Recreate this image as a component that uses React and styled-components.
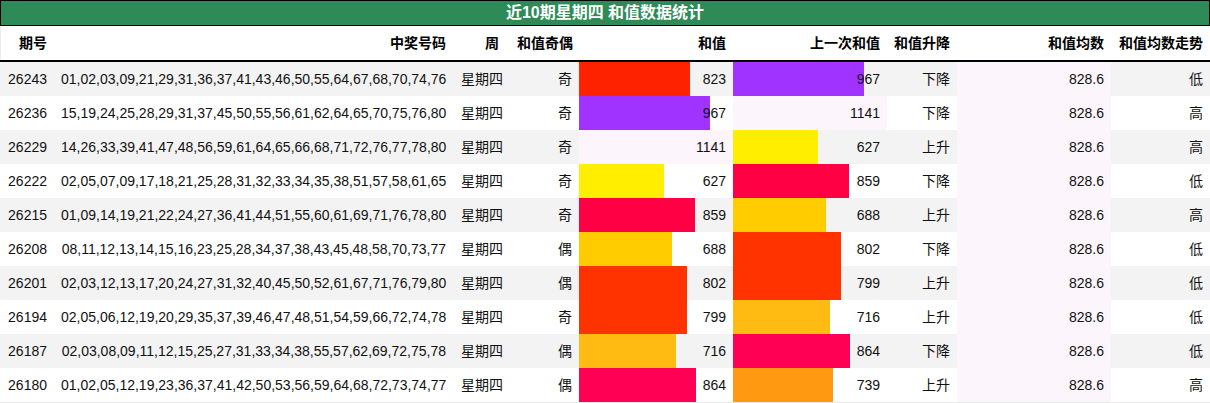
import React from 'react';
import styled, { createGlobalStyle } from 'styled-components';

const GREEN = '#2e8b57';
const STRIPE = '#f3f3f3';
const PALE = '#fcf5fc';
const MAX_SUM = 1141;
const COLS = '54px 399px 57px 69px 154px 154px 70px 154px 99px';

const GlobalStyle = createGlobalStyle`
  body {
    margin: 0;
    background: #fff;
    font-family: "Liberation Sans", "Noto Sans CJK SC", sans-serif;
    color: #111;
  }
`;

const SUM_COLORS = {
  823: '#ff2200',
  967: '#a033ff',
  1141: PALE,
  627: '#ffee00',
  859: '#ff0044',
  688: '#ffcc00',
  802: '#ff3300',
  799: '#ff3300',
  716: '#ffbb11',
  864: '#ff0055',
  739: '#ff9911',
};

const rows = [
  ['26243', '01,02,03,09,21,29,31,36,37,41,43,46,50,55,64,67,68,70,74,76', '奇', 823, 967, '下降', '低'],
  ['26236', '15,19,24,25,28,29,31,37,45,50,55,56,61,62,64,65,70,75,76,80', '奇', 967, 1141, '下降', '高'],
  ['26229', '14,26,33,39,41,47,48,56,59,61,64,65,66,68,71,72,76,77,78,80', '奇', 1141, 627, '上升', '高'],
  ['26222', '02,05,07,09,17,18,21,25,28,31,32,33,34,35,38,51,57,58,61,65', '奇', 627, 859, '下降', '低'],
  ['26215', '01,09,14,19,21,22,24,27,36,41,44,51,55,60,61,69,71,76,78,80', '奇', 859, 688, '上升', '高'],
  ['26208', '08,11,12,13,14,15,16,23,25,28,34,37,38,43,45,48,58,70,73,77', '偶', 688, 802, '下降', '低'],
  ['26201', '02,03,12,13,17,20,24,27,31,32,40,45,50,52,61,67,71,76,79,80', '偶', 802, 799, '上升', '低'],
  ['26194', '02,05,06,12,19,20,29,35,37,39,46,47,48,51,54,59,66,72,74,78', '奇', 799, 716, '上升', '低'],
  ['26187', '02,03,08,09,11,12,15,25,27,31,33,34,38,55,57,62,69,72,75,78', '偶', 716, 864, '下降', '低'],
  ['26180', '01,02,05,12,19,23,36,37,41,42,50,53,56,59,64,68,72,73,74,77', '偶', 864, 739, '上升', '高'],
];

const headers = ['期号', '中奖号码', '周', '和值奇偶', '和值', '上一次和值', '和值升降', '和值均数', '和值均数走势'];

const Table = styled.div`
  width: 1210px;
  border-bottom: 1px solid #e8e8e8;
`;

const Title = styled.div`
  box-sizing: border-box;
  height: 26px;
  line-height: 24px;
  border: 1px solid #000;
  background: ${GREEN};
  color: #fff;
  font-weight: bold;
  font-size: 16px;
  text-align: center;
`;

const HeadRow = styled.div`
  display: grid;
  grid-template-columns: ${COLS};
  height: 36px;
  box-sizing: border-box;
  box-shadow: inset 1px 0 0 #ececec;
  border-bottom: 2px solid #000;
`;

const HeadCell = styled.div`
  padding: 0 7px;
  line-height: 34px;
  font-size: 14px;
  font-weight: bold;
  text-align: right;
  white-space: nowrap;
  color: #000;

  &:nth-child(3) {
    padding-right: 11px;
  }
`;

const Row = styled.div`
  display: grid;
  grid-template-columns: ${COLS};
  height: 34px;
  background: ${({ $striped }) => ($striped ? STRIPE : '#fff')};
`;

const Cell = styled.div`
  padding: 0 7px;
  line-height: 34px;
  font-size: 14px;
  text-align: right;
  white-space: nowrap;
`;

const BarCell = styled(Cell)`
  background: linear-gradient(
    90deg,
    ${({ $color }) => $color} 0,
    ${({ $color }) => $color} ${({ $pct }) => $pct}%,
    transparent ${({ $pct }) => $pct}%
  );
`;

const MeanCell = styled(Cell)`
  background: ${PALE};
`;

const SumBar = ({ value }) => (
  <BarCell $color={SUM_COLORS[value]} $pct={((value / MAX_SUM) * 100).toFixed(2)}>
    {value}
  </BarCell>
);

const App = () => (
  <>
    <GlobalStyle />
    <Table>
      <Title>近10期星期四 和值数据统计</Title>
      <HeadRow>
        {headers.map((h) => (
          <HeadCell key={h}>{h}</HeadCell>
        ))}
      </HeadRow>
      {rows.map(([issue, nums, parity, sum, prev, dir, trend], i) => (
        <Row key={issue} $striped={i % 2 === 0}>
          <Cell>{issue}</Cell>
          <Cell>{nums}</Cell>
          <Cell>星期四</Cell>
          <Cell>{parity}</Cell>
          <SumBar value={sum} />
          <SumBar value={prev} />
          <Cell>{dir}</Cell>
          <MeanCell>828.6</MeanCell>
          <Cell>{trend}</Cell>
        </Row>
      ))}
    </Table>
  </>
);

export default App;
